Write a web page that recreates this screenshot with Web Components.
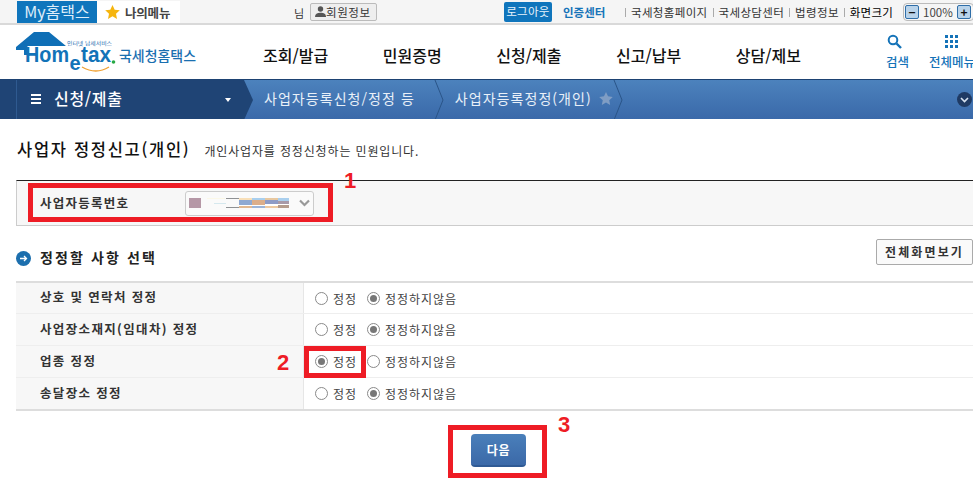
<!DOCTYPE html>
<html lang="ko">
<head>
<meta charset="utf-8">
<title>국세청 홈택스</title>
<style>
	html, body { margin: 0; height: 496px; overflow: hidden; background: #fff; }
	body { position: relative; font-family: "Noto Sans CJK KR", "Noto Sans", sans-serif; color: #222; }
</style>
</head>
<body>
<ht-topbar></ht-topbar>
<ht-header></ht-header>
<ht-crumbs></ht-crumbs>
<ht-title heading="사업자 정정신고(개인)">개인사업자를 정정신청하는 민원입니다.</ht-title>
<ht-bizno label="사업자등록번호"></ht-bizno>
<ht-section button="전체화면보기">정정할 사항 선택</ht-section>
<ht-table>
	<ht-row value="no">상호 및 연락처 정정</ht-row>
	<ht-row value="no">사업장소재지(임대차) 정정</ht-row>
	<ht-row value="yes">업종 정정</ht-row>
	<ht-row value="no">송달장소 정정</ht-row>
</ht-table>
<ht-next>다음</ht-next>
<ht-marks></ht-marks>

<script>
// small helper, every element here is just markup + style in an open shadow root
function shadow(el, html) {
	el.attachShadow({mode: "open"}).innerHTML = html;
}

class HtTopbar extends HTMLElement {
	connectedCallback() {
		shadow(this, /* html */ `
<style>
	:host { display: flex; align-items: center; height: 23px; background: #f5f5f5; border-bottom: 2px solid #d9d9d9; padding-left: 17px; font-size: 12px; color: #333; white-space: nowrap; overflow: hidden; }
	:host > * { flex: none; }
	.my { width: 80px; height: 23px; margin-top: 1px; background: #0f75bc; color: #dfeefa; font-size: 16px; line-height: 21px; text-align: center; }
	.fav { display: flex; align-items: center; gap: 5px; width: 83px; height: 23px; margin-top: 1px; box-sizing: border-box; padding-left: 8px; background: #fff; font-weight: 700; color: #444; font-size: 12.5px; letter-spacing: -.2px; }
	.nim { margin-left: 114px; width: 12px; font-size: 11px; margin-top: 3px; }
	.info { display: flex; align-items: center; margin-left: 4px; width: 67px; height: 18px; box-sizing: border-box; border: 1px solid #bbb; border-radius: 2px; background: #eee; padding-left: 4px; letter-spacing: .55px; font-size: 11.5px; }
	.out { margin-left: 127px; width: 48px; height: 20px; background: #0f75bc; border-radius: 2px; color: #e8f3fb; text-align: center; line-height: 19px; letter-spacing: .3px; font-size: 11.5px; }
	.cert { margin-left: 11px; width: 47px; color: #1573b8; font-weight: 700; font-size: 11.5px; }
	.link { letter-spacing: .35px; font-size: 11.5px; }
	.link::before { content: ""; display: inline-block; width: 1px; height: 9px; background: #aaa; margin: 0 5px 0 6px; }
	.link.first { margin-left: 9px; }
	.link.center { margin-left: -1px; }
	.link.law { margin: 0 -1px 0 -1px; }
	.link.dark { color: #000; letter-spacing: .2px; margin-right: 10px; }
	.zoom { display: flex; align-items: center; width: 71px; height: 18px; box-sizing: border-box; border: 1px solid #bbb; border-radius: 4px; padding-left: 1px; color: #444; font-size: 11.5px; }
	.zoom b { flex: none; width: 14px; height: 14px; box-sizing: border-box; border: 1px solid #2f6ea8; border-radius: 2px; background: #b9d3ea; color: #111; text-align: center; line-height: 11px; font-size: 12px; }
	.zoom span { width: 38px; text-align: center; }
</style>
<div class="my">My홈택스</div>
<div class="fav">
	<svg width="15" height="14" viewBox="0 0 15 14"><path fill="#f5b50f" d="M7.5 0l2.2 4.7 5.1.6-3.8 3.5 1 5.1-4.5-2.6-4.5 2.6 1-5.1L.2 5.3l5.1-.6z"/></svg>
	<span>나의메뉴</span>
</div>
<div class="nim">님</div>
<div class="info">
	<svg width="11" height="11" viewBox="0 0 11 11"><circle cx="5.5" cy="3" r="2.7" fill="#555"/><path fill="#555" d="M0 11c0-3 2-4.2 5.5-4.2S11 8 11 11z"/></svg>
	<span>회원정보</span>
</div>
<div class="out">로그아웃</div>
<div class="cert">인증센터</div>
<div class="link first">국세청홈페이지</div>
<div class="link center">국세상담센터</div>
<div class="link law">법령정보</div>
<div class="link dark">화면크기</div>
<div class="zoom"><b>−</b><span>100%</span><b>+</b></div>
`);
	}
}

class HtHeader extends HTMLElement {
	connectedCallback() {
		shadow(this, /* html */ `
<style>
	:host { display: flex; align-items: center; height: 54px; background: #fff; white-space: nowrap; overflow: hidden; }
	:host > * { flex: none; }
	.logo { width: 263px; height: 54px; }
	nav { display: flex; gap: 54.6px; font-size: 16px; font-weight: 500; color: #111; margin-top: 6px; }
	.tools { display: flex; margin-left: 85px; gap: 20px; color: #1573b8; font-size: 12.5px; font-weight: 500; margin-top: 1px; }
	.tool { display: flex; flex: none; flex-direction: column; align-items: center; gap: 3px; }
	.tool svg { display: block; }
	.tool.find svg { margin-right: 5px; }
</style>
<svg class="logo" viewBox="0 0 263 54">
	<path fill="#0f6fb6" d="M16 22L34 7L49 7L66 21L27.500 21L27.500 30L24 30L24 25L16 25Z"/>
	<text x="25" y="37" font-family="Liberation Sans, sans-serif" font-weight="700" font-size="22" fill="#1273b8" textLength="44" lengthAdjust="spacingAndGlyphs">Hom</text>
	<text x="69.500" y="45" font-family="Liberation Sans, sans-serif" font-weight="700" font-size="20" fill="#1273b8">e</text>
	<text x="81" y="37" font-family="Liberation Sans, sans-serif" font-weight="700" font-size="22" fill="#1273b8" textLength="30" lengthAdjust="spacingAndGlyphs">tax</text>
	<circle cx="113.500" cy="37" r="1.800" fill="#27a844"/>
	<path d="M82 42Q96 50 109 42" fill="none" stroke="#f0a030" stroke-width="1.300"/>
	<text x="67" y="20" font-family="Noto Sans CJK KR, sans-serif" font-size="5" fill="#2a6db0" textLength="45" lengthAdjust="spacingAndGlyphs">인터넷 납세서비스</text>
	<text x="119" y="36" font-family="Noto Sans CJK KR, sans-serif" font-weight="500" font-size="14" fill="#1a6fb0" textLength="77" lengthAdjust="spacingAndGlyphs">국세청홈택스</text>
</svg>
<nav>
	<span>조회/발급</span><span>민원증명</span><span>신청/제출</span><span>신고/납부</span><span>상담/제보</span>
</nav>
<div class="tools">
	<div class="tool find">
		<svg width="15" height="15" viewBox="0 0 15 15"><circle cx="6" cy="6" r="4.300" fill="none" stroke="#1573b8" stroke-width="2"/><path d="M9.500 9.500L14 14" stroke="#1573b8" stroke-width="2.400"/></svg>
		<span>검색</span>
	</div>
	<div class="tool">
		<svg width="13" height="15" viewBox="0 0 13 15" fill="#1573b8"><rect y="1" width="3" height="3"/><rect x="5" y="1" width="3" height="3"/><rect x="10" y="1" width="3" height="3"/><rect y="6" width="3" height="3"/><rect x="5" y="6" width="3" height="3"/><rect x="10" y="6" width="3" height="3"/><rect y="11" width="3" height="3"/><rect x="5" y="11" width="3" height="3"/><rect x="10" y="11" width="3" height="3"/></svg>
		<span>전체메뉴</span>
	</div>
</div>
`);
	}
}

class HtCrumbs extends HTMLElement {
	connectedCallback() {
		const chevron = `<svg class="chev" width="10" height="40" viewBox="0 0 10 40"><path d="M1 0L9 20L1 40" fill="none" stroke="#2a5488"/></svg>`;
		shadow(this, /* html */ `
<style>
	:host { display: flex; align-items: center; height: 40px; background: linear-gradient(#4c82bd, #3a69a9); color: #e9f0f8; font-size: 14px; white-space: nowrap; overflow: hidden; border-top: 1px solid #1d4272; box-sizing: border-box; }
	:host > * { flex: none; }
	.head { display: flex; align-items: center; width: 244px; height: 40px; box-sizing: border-box; background: #1f4475; color: #fff; font-size: 16px; font-weight: 500; letter-spacing: .7px; padding-left: 31px; position: relative; }
	.head::before { content: ""; position: absolute; left: 16px; top: 0; bottom: 0; width: 1px; background: #2f5a90; }
	.head .txt { margin-top: -3px; }
	.burger { width: 10px; height: 10px; margin: -1px 13px 0 0; border-top: 2px solid #fff; border-bottom: 2px solid #fff; box-sizing: border-box; position: relative; }
	.burger::after { content: ""; position: absolute; left: 0; right: 0; top: 2px; height: 2px; background: #fff; }
	.caret { margin-left: auto; margin-right: 13px; width: 0; height: 0; border: 3.500px solid transparent; border-top: 4px solid #fff; border-bottom: 0; }
	.tip { width: 0; height: 0; border-left: 9px solid #1f4475; border-top: 20px solid transparent; border-bottom: 20px solid transparent; }
	.crumb { margin: -3px 0 0 11px; letter-spacing: 1.05px; }
	.chev { margin-left: 19px; }
	.chev.c2 { margin-left: 0; }
	.star { margin: -3px 0 0 7px; }
	.more { margin-left: auto; margin-right: 1px; width: 15px; height: 15px; margin-top: -1px; }
</style>
<div class="head"><span class="burger"></span><span class="txt">신청/제출</span><span class="caret"></span></div>
<div class="tip"></div>
<span class="crumb">사업자등록신청/정정 등</span>
${chevron}
<span class="crumb">사업자등록정정(개인)</span>
<svg class="star" width="14" height="13" viewBox="0 0 15 14"><path fill="#7f9dc4" d="M7.500 0l2.200 4.700 5.100.6-3.800 3.500 1 5.100-4.500-2.600-4.500 2.600 1-5.100L.2 5.300l5.100-.6z"/></svg>
${chevron.replace('class="chev"', 'class="chev c2"')}
<svg class="more" viewBox="0 0 15 15"><circle cx="7.500" cy="7.500" r="7.500" fill="#1f3a63"/><path d="M4 6l3.500 3.500L11 6" fill="none" stroke="#d8e3f0" stroke-width="1.600"/></svg>
`);
	}
}

class HtTitle extends HTMLElement {
	connectedCallback() {
		shadow(this, /* html */ `
<style>
	:host { display: flex; align-items: center; height: 61px; padding-left: 17px; white-space: nowrap; }
	h1 { margin: -2px 0 0; font-size: 16.500px; font-weight: 500; letter-spacing: 1.7px; color: #111; }
	p { margin: 1px 0 0 14px; font-size: 12px; letter-spacing: .85px; color: #333; }
</style>
<h1>${this.getAttribute("heading")}</h1>
<p><slot></slot></p>
`);
	}
}

class HtBizno extends HTMLElement {
	connectedCallback() {
		shadow(this, /* html */ `
<style>
	:host { display: flex; align-items: center; height: 46px; margin-left: 16px; box-sizing: border-box; background: #f7f7f7; border-top: 1px solid #222; border-bottom: 1px solid #ccc; border-left: 1px solid #ccc; padding-left: 23px; white-space: nowrap; }
	.label { flex: none; width: 145px; font-size: 12.500px; font-weight: 700; color: #333; letter-spacing: 1.25px; margin-top: -2px; }
	.select { display: flex; align-items: center; justify-content: space-between; width: 129px; height: 25px; box-sizing: border-box; border: 1px solid #ccc; border-radius: 3px; background: #fafafa; padding: 0 3px; }
</style>
<span class="label">${this.getAttribute("label")}</span>
<div class="select">
	<svg width="101" height="10" viewBox="0 0 101 10" shape-rendering="crispEdges">
		<rect width="12" height="10" fill="#b597a6"/>
		<rect x="18" width="18" height="1" fill="#fbf8e8"/>
		<rect x="25" y="5" width="12" height="1" fill="#d5e8ee"/>
		<rect x="37" width="13" height="1" fill="#8f9194"/>
		<rect x="37" y="9" width="13" height="1" fill="#8f9194"/>
		<rect x="50" width="13" height="2" fill="#f8dfb8"/>
		<rect x="50" y="2" width="13" height="5" fill="#8fa9d2"/>
		<rect x="50" y="7" width="13" height="1" fill="#fff"/>
		<rect x="50" y="8" width="13" height="2" fill="#e2b890"/>
		<rect x="63" width="13" height="2" fill="#a9cfee"/>
		<rect x="63" y="2" width="13" height="5" fill="#dcae8a"/>
		<rect x="63" y="7" width="13" height="1" fill="#fff"/>
		<rect x="63" y="8" width="13" height="2" fill="#9cb4d8"/>
		<rect x="76" width="13" height="2" fill="#e8c8a0"/>
		<rect x="76" y="2" width="13" height="4" fill="#8e9bc6"/>
		<rect x="76" y="6" width="13" height="2" fill="#fff"/>
		<rect x="76" y="8" width="13" height="2" fill="#eec9a0"/>
		<rect x="89" width="11" height="3" fill="#a9cfee"/>
		<rect x="89" y="3" width="11" height="3" fill="#a899a8"/>
		<rect x="89" y="6" width="11" height="1" fill="#fff"/>
		<rect x="89" y="7" width="11" height="3" fill="#b49b8c"/>
	</svg>
	<svg width="11" height="8" viewBox="0 0 11 8"><path d="M1 1.500L5.500 6L10 1.500" fill="none" stroke="#999" stroke-width="2.200"/></svg>
</div>
`);
	}
}

class HtSection extends HTMLElement {
	connectedCallback() {
		shadow(this, /* html */ `
<style>
	:host { display: flex; align-items: center; height: 55px; margin-left: 16px; white-space: nowrap; }
	.dot { flex: none; width: 15px; height: 15px; margin-top: 9px; }
	h2 { margin: 7px 0 0 9px; font-size: 14px; font-weight: 700; letter-spacing: 2.1px; color: #222; }
	button { margin: -4px 0 0 auto; width: 97px; height: 26px; box-sizing: border-box; border: 1px solid #aaa; border-radius: 2px; background: #fafafa; font: 700 12px "Noto Sans CJK KR", sans-serif; letter-spacing: 2.1px; color: #333; padding: 0; }
</style>
<svg class="dot" viewBox="0 0 15 15"><circle cx="7.500" cy="7.500" r="7.500" fill="#1c6fae"/><path d="M4 7.500h6M8 5l2.500 2.500L8 10" fill="none" stroke="#fff" stroke-width="1.300"/></svg>
<h2><slot></slot></h2>
<button>${this.getAttribute("button")}</button>
`);
	}
}

class HtTable extends HTMLElement {
	connectedCallback() {
		shadow(this, /* html */ `
<style>
	:host { display: block; margin-left: 16px; border-top: 2px solid #ddd; border-bottom: 2px solid #ddd; }
</style>
<slot></slot>
`);
	}
}

class HtRow extends HTMLElement {
	connectedCallback() {
		const yes = this.getAttribute("value") === "yes";
		shadow(this, /* html */ `
<style>
	:host { display: grid; grid-template-columns: 288px 1fr; height: 32px; box-sizing: border-box; white-space: nowrap; }
	:host(:not(:last-child)) { border-bottom: 1px solid #eee; }
	:host(:first-child), :host(:last-child) { height: 31px; }
	.label { display: flex; align-items: center; padding: 0 0 3px 24px; background: #f7f7f7; border-right: 1px solid #e6e6e6; font-size: 12.500px; font-weight: 700; letter-spacing: 1.35px; color: #333; }
	.opts { display: flex; align-items: center; padding-left: 11px; font-size: 12px; color: #444; }
	.opts span { letter-spacing: .95px; }
	i { flex: none; width: 13px; height: 13px; box-sizing: border-box; border: 1px solid #8a8a8a; border-radius: 50%; background: #fff; margin-right: 5px; position: relative; }
	i.on::after { content: ""; position: absolute; inset: 2px; border-radius: 50%; background: #777; }
	.second { margin-left: 10px; }
</style>
<div class="label"><slot></slot></div>
<div class="opts">
	<i class="${yes ? "on" : ""}"></i><span>정정</span>
	<i class="second ${yes ? "" : "on"}"></i><span>정정하지않음</span>
</div>
`);
	}
}

class HtNext extends HTMLElement {
	connectedCallback() {
		shadow(this, /* html */ `
<style>
	:host { display: flex; justify-content: center; margin: 23px 0 0 24px; }
	button { width: 55px; height: 33px; padding: 0; border: 0; border-radius: 4px; border-bottom: 2px solid #2f5a94; background: linear-gradient(#4a7fba, #3b69a8); color: #fff; font: 700 12px "Noto Sans CJK KR", sans-serif; letter-spacing: .6px; }
</style>
<button><slot></slot></button>
`);
	}
}

// the red annotations lie over the page, so these are the absolute ones
class HtMarks extends HTMLElement {
	connectedCallback() {
		shadow(this, /* html */ `
<style>
	:host { display: block; position: absolute; inset: 0; pointer-events: none; }
	.box { position: absolute; box-sizing: border-box; border: 5px solid #ee1c25; }
	.num { position: absolute; font: 700 22px/22px "Liberation Sans", sans-serif; color: #ee1c25; }
</style>
<div class="box" style="left:28px;top:183px;width:305px;height:39px"></div>
<div class="box" style="left:304px;top:346px;width:62px;height:32px"></div>
<div class="box" style="left:448px;top:425px;width:99px;height:53px"></div>
<div class="num" style="left:344px;top:170px">1</div>
<div class="num" style="left:277px;top:352px">2</div>
<div class="num" style="left:558px;top:414px">3</div>
`);
	}
}

customElements.define("ht-topbar", HtTopbar);
customElements.define("ht-header", HtHeader);
customElements.define("ht-crumbs", HtCrumbs);
customElements.define("ht-title", HtTitle);
customElements.define("ht-bizno", HtBizno);
customElements.define("ht-section", HtSection);
customElements.define("ht-table", HtTable);
customElements.define("ht-row", HtRow);
customElements.define("ht-next", HtNext);
customElements.define("ht-marks", HtMarks);
</script>
</body>
</html>
